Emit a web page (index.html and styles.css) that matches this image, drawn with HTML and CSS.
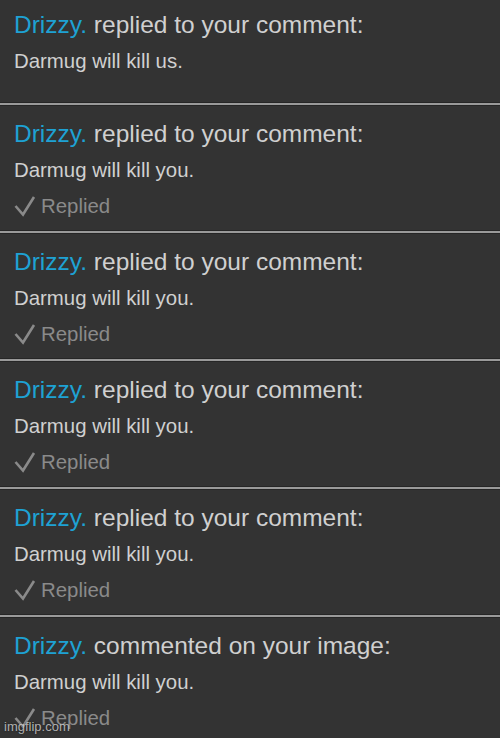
FILE: index.html
```html
<!DOCTYPE html>
<html lang="en">
<head>
    <meta charset="UTF-8">
    <meta name="viewport" content="width=device-width, initial-scale=1.0">
    <title>Notifications</title>
    <link rel="stylesheet" href="styles.css">
</head>
<body>
    <div class="notice-list">
        <div class="notice notice-first">
            <div class="notice-title"><span class="user">Drizzy.</span> replied to your comment:</div>
            <div class="notice-body">Darmug will kill us.</div>
        </div>
        <div class="notice">
            <div class="notice-title"><span class="user">Drizzy.</span> replied to your comment:</div>
            <div class="notice-body">Darmug will kill you.</div>
            <div class="notice-status">
                <svg class="check" width="22" height="22" viewBox="0 0 22 22"><polyline points="1.5,11 9,19.5 20,2" /></svg>
                Replied
            </div>
        </div>
        <div class="notice">
            <div class="notice-title"><span class="user">Drizzy.</span> replied to your comment:</div>
            <div class="notice-body">Darmug will kill you.</div>
            <div class="notice-status">
                <svg class="check" width="22" height="22" viewBox="0 0 22 22"><polyline points="1.5,11 9,19.5 20,2" /></svg>
                Replied
            </div>
        </div>
        <div class="notice">
            <div class="notice-title"><span class="user">Drizzy.</span> replied to your comment:</div>
            <div class="notice-body">Darmug will kill you.</div>
            <div class="notice-status">
                <svg class="check" width="22" height="22" viewBox="0 0 22 22"><polyline points="1.5,11 9,19.5 20,2" /></svg>
                Replied
            </div>
        </div>
        <div class="notice">
            <div class="notice-title"><span class="user">Drizzy.</span> replied to your comment:</div>
            <div class="notice-body">Darmug will kill you.</div>
            <div class="notice-status">
                <svg class="check" width="22" height="22" viewBox="0 0 22 22"><polyline points="1.5,11 9,19.5 20,2" /></svg>
                Replied
            </div>
        </div>
        <div class="notice">
            <div class="notice-title"><span class="user">Drizzy.</span> commented on your image:</div>
            <div class="notice-body">Darmug will kill you.</div>
            <div class="notice-status">
                <svg class="check" width="22" height="22" viewBox="0 0 22 22"><polyline points="1.5,11 9,19.5 20,2" /></svg>
                Replied
            </div>
        </div>
    </div>
    <div class="watermark">imgflip.com</div>
</body>
</html>
```

FILE: styles.css
```css
body {
    margin: 0;
    width: 500px;
    height: 738px;
    overflow: hidden;
    background-color: #333333;
    font-family: 'Liberation Sans', Arial, sans-serif;
    position: relative;
}

.notice-list {
    display: flex;
    flex-direction: column;
}

.notice {
    padding: 15px 14px 13px;
    border-bottom: 2px solid #9a9a9a;
    box-shadow: inset 0 -1px 0 #262626, 0 1px 0 #262626;
}

.notice-first {
    padding-top: 11px;
    padding-bottom: 30px;
}

.notice:last-child {
    border-bottom: none;
    box-shadow: none;
}

.notice-title {
    font-size: 24.5px;
    line-height: 28px;
    color: #d0d0d0;
}

.user {
    color: #1ea2d4;
}

.notice-body {
    margin-top: 10px;
    font-size: 20.4px;
    line-height: 24px;
    color: #d0d0d0;
}

.notice-status {
    margin-top: 12px;
    display: flex;
    align-items: center;
    gap: 5px;
    font-size: 20.4px;
    line-height: 24px;
    color: #8a8a8a;
}

.check {
    fill: none;
    stroke: #8a8a8a;
    stroke-width: 2.6;
}

.watermark {
    position: absolute;
    left: 4px;
    bottom: 4px;
    font-size: 13px;
    color: rgba(255, 255, 255, 0.65);
    text-shadow: 0 0 2px rgba(0, 0, 0, 0.6);
}
```
